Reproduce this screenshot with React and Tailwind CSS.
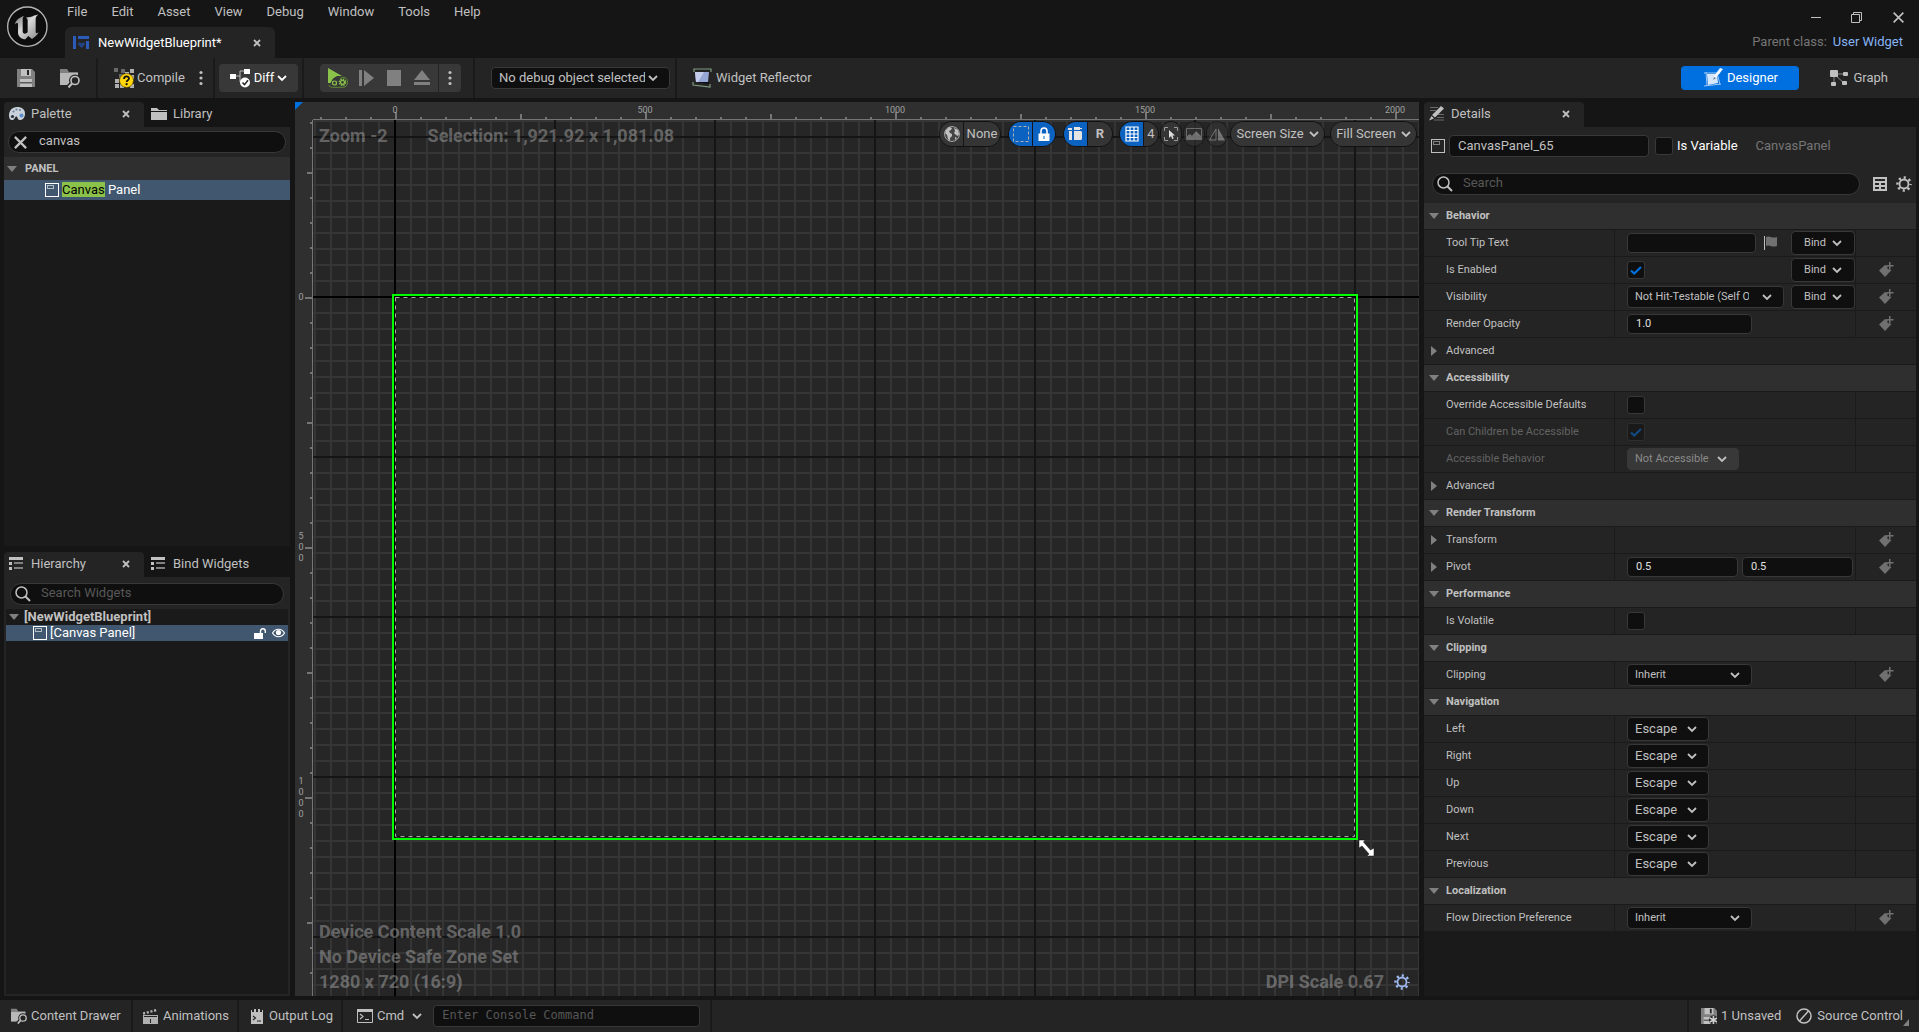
import { useState } from 'react';

const menus = ['File', 'Edit', 'Asset', 'View', 'Debug', 'Window', 'Tools', 'Help'];

const sections = [
  {
    title: 'Behavior',
    rows: [
      { label: 'Tool Tip Text', type: 'text', bind: true, flag: true },
      { label: 'Is Enabled', type: 'check', checked: true, bind: true, key: true },
      {
        label: 'Visibility',
        type: 'select',
        value: 'Not Hit-Testable (Self Only)',
        width: 'w-[157px]',
        padding: 'pr-[34px]',
        bind: true,
        key: true,
      },
      { label: 'Render Opacity', type: 'number', values: ['1.0'], key: true },
      { label: 'Advanced', type: 'advanced' },
    ],
  },
  {
    title: 'Accessibility',
    rows: [
      { label: 'Override Accessible Defaults', type: 'check' },
      { label: 'Can Children be Accessible', type: 'check', checked: true, disabled: true },
      {
        label: 'Accessible Behavior',
        type: 'select',
        value: 'Not Accessible',
        width: 'w-[112px]',
        disabled: true,
      },
      { label: 'Advanced', type: 'advanced' },
    ],
  },
  {
    title: 'Render Transform',
    rows: [
      { label: 'Transform', type: 'empty', expand: true, key: true },
      { label: 'Pivot', type: 'number', values: ['0.5', '0.5'], expand: true, key: true },
    ],
  },
  { title: 'Performance', rows: [{ label: 'Is Volatile', type: 'check' }] },
  {
    title: 'Clipping',
    rows: [{ label: 'Clipping', type: 'select', value: 'Inherit', width: 'w-[125px]', key: true }],
  },
  {
    title: 'Navigation',
    rows: ['Left', 'Right', 'Up', 'Down', 'Next', 'Previous'].map((label) => ({
      label,
      type: 'escape',
    })),
  },
  {
    title: 'Localization',
    rows: [
      {
        label: 'Flow Direction Preference',
        type: 'select',
        value: 'Inherit',
        width: 'w-[125px]',
        key: true,
      },
    ],
  },
];

/* ---------- icons ---------- */

function Chevron({ className = '' }) {
  return (
    <svg className={className} width="10" height="10" viewBox="0 0 10 10" fill="none" stroke="currentColor" strokeWidth="1.8">
      <path d="M1 3l4 4 4-4" />
    </svg>
  );
}

function Cross({ size = 8, stroke = 1.8 }) {
  return (
    <svg width={size} height={size} viewBox="0 0 8 8" fill="none" stroke="currentColor" strokeWidth={stroke}>
      <path d="M1 1l6 6M7 1L1 7" />
    </svg>
  );
}

function Dots() {
  return (
    <svg width="4" height="16" viewBox="0 0 4 16" fill="currentColor">
      <circle cx="2" cy="2.5" r="1.6" />
      <circle cx="2" cy="8" r="1.6" />
      <circle cx="2" cy="13.5" r="1.6" />
    </svg>
  );
}

function Arrow({ open }) {
  return (
    <svg width="10" height="10" viewBox="0 0 10 10" fill="#808080">
      {open ? <path d="M0 2h10L5 8z" /> : <path d="M2 0v10l6-5z" />}
    </svg>
  );
}

function UnrealLogo() {
  return (
    <svg width="44" height="44" viewBox="0 0 132 132">
      <defs>
        <linearGradient id="metal" x1="0" y1="0" x2="1" y2="1">
          <stop offset="0" stopColor="#6d6d6d" />
          <stop offset="0.45" stopColor="#d8d8d8" />
          <stop offset="1" stopColor="#8a8a8a" />
        </linearGradient>
      </defs>
      <circle cx="67" cy="68" r="59" fill="#0d0d0d" stroke="#b4b4b4" strokeWidth="4" />
      <path
        fill="url(#metal)"
        d="M29 61c6-15 15-21 28-25-3 3-4 6-4 10v36c0 7 6 9 11 6l4-3V50c0-6-2-8-6-9 9-2 19-2 24-6 5-1 9-1 14-4-6 6-8 10-8 15v37c0 5 4 6 9 2-4 9-12 15-20 20l-11-9-9 10c-12-1-21-8-22-20V62c0-6-4-6-10-1z"
      />
    </svg>
  );
}

function BlueprintIcon() {
  return (
    <svg width="16" height="14" viewBox="0 0 16 14">
      <path fill="#2d5bb9" d="M0 0h3v13H0zM5 0h11v3H5zM13 5h3v8h-3z" />
      <path fill="#234384" d="M8.500 12L5 8.500c0-2.500 2.500-2.500 3.500-1 1-1.500 3.500-1.500 3.500 1z" />
    </svg>
  );
}

function SaveIcon({ star }) {
  const size = star ? 16 : 18;
  return (
    <svg width={size} height={size} viewBox="0 0 18 18">
      <path fill="#808080" d="M0 0h15l3 3v15H0z" />
      <path fill="#c0c0c0" d="M4 0h10v7H4zM3 10h12v8H3z" />
      <path fill="#242424" d="M10 1h2v5h-2z" />
      <path fill="#5a5a5a" d="M3 13h12v1.500H3z" />
      {star && (
        <>
          <circle cx="14" cy="13.500" r="5" fill="#242424" />
          <path stroke="#d0d0d0" strokeWidth="1.800" d="M14 9v9M10 11.200l8 4.600M18 11.200l-8 4.600" />
        </>
      )}
    </svg>
  );
}

function BrowseIcon({ size = 20 }) {
  return (
    <svg width={size} height={size} viewBox="0 0 20 20">
      <path fill="#808080" d="M0 1h7l2 3h9v2H0z" />
      <path fill="#b8b8b8" d="M0 5h18v12H0z" />
      <circle cx="15" cy="12.500" r="6" fill="#242424" />
      <path stroke="#242424" strokeWidth="4" d="M12 15l-5 5" />
      <circle cx="15" cy="12.500" r="4" fill="#242424" stroke="#c0c0c0" strokeWidth="1.600" />
      <path stroke="#c0c0c0" strokeWidth="2" d="M12 15.500L8.500 19.500" />
    </svg>
  );
}

function CompileIcon() {
  return (
    <svg width="20" height="20" viewBox="0 0 20 20">
      <path fill="#6a6a6a" d="M0 0h4v4H0zM7 1h4v4H7zM5 6h4v4H5z" />
      <path fill="#b0b0b0" d="M16 1h4v4h-4zM11 4h4v3h-4zM1 11h4v4H1zM1 16h4v4H1zM6 16h4v4H6zM16 7h4v4h-4zM16 16h4v4h-4z" />
      <circle cx="12.500" cy="12.500" r="7" fill="#ffd60a" stroke="#3a3000" strokeWidth="0.600" />
      <path fill="none" stroke="#111" strokeWidth="1.800" d="M10 11c0-3.400 5-3.400 5-.4 0 1.700-2.400 1.600-2.400 3.400" />
      <circle cx="12.600" cy="16.200" r="1.100" fill="#111" />
    </svg>
  );
}

function DiffIcon() {
  return (
    <svg width="21" height="20" viewBox="0 0 21 20">
      <path fill="none" stroke="#bbb" d="M6 8h4V3h4M10 8v6h3" />
      <path fill="#fff" d="M0 6h6v5H0zM14 1h6v5h-6z" />
      <circle cx="15" cy="14.500" r="5" fill="#fff" />
      <path fill="none" stroke="#222" strokeWidth="1.500" d="M12.500 14.500l2 2.200 3.500-4.400" />
    </svg>
  );
}

function PlayIcon() {
  return (
    <svg width="20" height="20" viewBox="0 0 20 20">
      <path fill="#8bc34a" d="M0 0l14 8H9l-4 2.500-2.500 4.500H0z" />
      <path
        fill="none"
        stroke="#5f8a35"
        d="M1 17c0 1.500 1.500 2.300 3.500 2.300H15c3 0 4.500-2 4.500-5s-1.500-5-4.500-5c-1.500 0-2.500.6-3.200 1.500"
      />
      <path stroke="#8bc34a" strokeWidth="3" strokeDasharray="1.200 0.800" d="M4 15h5" />
      <circle cx="6.500" cy="15" r="2" fill="#383838" stroke="#8bc34a" strokeWidth="1.200" />
      <circle cx="14.500" cy="14.300" r="3" fill="none" stroke="#8bc34a" strokeWidth="1.600" strokeDasharray="1.400 0.950" />
      <circle cx="14.500" cy="14.300" r="2" fill="#383838" stroke="#8bc34a" strokeWidth="1.200" />
    </svg>
  );
}

function ReflectorIcon() {
  return (
    <svg width="20" height="20" viewBox="0 0 20 20">
      <path fill="#97a7d6" d="M3 4h14l-1 10H4z" />
      <path fill="#c3ccea" d="M3 4h9l-6 10H4z" />
      <path fill="none" stroke="#7f9b80" strokeWidth="1.200" d="M2 4V1h17v3M1 14v3l17 2v-3" />
      <path fill="#0b0e14" d="M4 14h13v2z" />
    </svg>
  );
}

function DesignerIcon() {
  return (
    <svg width="20" height="20" viewBox="0 0 20 20">
      <path fill="#d7e7fb" d="M4 6h10l1 9-10 2z" />
      <path fill="none" stroke="#9cc6f5" d="M1 5h16M3 4l1 14M1 18l17-2M15 8l2 9" />
      <path fill="#f4f8ff" d="M17 0l3 1-7 9-3 2 1-4z" />
      <path fill="#5d7897" d="M10 12l1-3 2 1z" />
    </svg>
  );
}

function GraphIcon() {
  return (
    <svg width="18" height="17" viewBox="0 0 18 17">
      <path stroke="#8a8a8a" d="M4 4h12M4 4v10M5 5l9 8" />
      <g fill="#c0c0c0">
        <rect width="8" height="7" rx="1" />
        <rect x="13" y="2" width="5" height="4" rx="1" />
        <rect x="1" y="12" width="5" height="4" rx="1" />
        <rect x="12" y="11" width="5" height="4" rx="1" />
      </g>
    </svg>
  );
}

function PaletteIcon() {
  return (
    <svg width="16" height="14" viewBox="0 0 16 14">
      <path fill="#c9d2da" d="M8 0c5 0 8 2.500 8 6.500 0 4-2 6.500-5 6.500s-2-3-3.500-3.500C6 9 6 13 3 13c-2 0-3-2-3-4.500C0 4 3 0 8 0z" />
      <g fill="#6d8299">
        <circle cx="4.500" cy="4.500" r="1.100" />
        <circle cx="7.500" cy="2.500" r="1.100" />
        <circle cx="11" cy="3" r="1.100" />
      </g>
      <circle cx="3.500" cy="9.500" r="1.600" fill="#2a2f36" />
      <circle cx="12.500" cy="8.500" r="2" fill="#5b8fc9" />
    </svg>
  );
}

function FolderIcon() {
  return (
    <svg width="16" height="12" viewBox="0 0 16 12" fill="#c0c0c0">
      <path d="M0 0h6l2 2h8v1H0zM0 4h16v8H0z" />
    </svg>
  );
}

function ListIcon() {
  return (
    <svg width="14" height="13" viewBox="0 0 14 13">
      <path fill="#c0c0c0" d="M0 0h14v3H0zM0 5h3v3H0zM0 10h3v3H0z" />
      <path fill="#808080" d="M5 5h9v2H5zM5 10h9v2H5z" />
    </svg>
  );
}

function DetailsIcon() {
  return (
    <svg width="16" height="15" viewBox="0 0 16 15">
      <path stroke="#6a6a6a" d="M1 1.500h8M1 4.500h6M9 8.500h6M8 11.500h7M5 14h10" />
      <path fill="#c0c0c0" d="M12 0l3 2.500-9 9L3 9zM2.500 10L5 12.500 0 14.500z" />
    </svg>
  );
}

function PanelIcon({ color = '#fff' }) {
  return (
    <svg width="14" height="14" viewBox="0 0 14 14" fill="none" stroke={color}>
      <rect x="0.500" y="0.500" width="13" height="13" />
      <rect x="2.500" y="2.500" width="6" height="3" strokeOpacity="0.600" />
    </svg>
  );
}

function SearchIcon() {
  return (
    <svg width="16" height="16" viewBox="0 0 16 16" fill="none" stroke="#c0c0c0">
      <circle cx="6.500" cy="6.500" r="5.500" strokeWidth="1.500" />
      <path strokeWidth="2" d="M10.500 10.500l4.500 4.500" />
    </svg>
  );
}

function GearIcon({ color = '#c0c0c0' }) {
  return (
    <svg width="16" height="16" viewBox="0 0 16 16" fill="none" stroke={color}>
      <circle cx="8" cy="8" r="4.500" strokeWidth="1.800" />
      <circle cx="8" cy="8" r="6.500" strokeWidth="2.500" strokeDasharray="2.200 2.905" strokeDashoffset="1.100" />
    </svg>
  );
}

function KeyIcon() {
  return (
    <svg width="16" height="16" viewBox="0 0 16 16" fill="#707070">
      <path d="M7 3l2.500 1v3l4 1-6.500 7-6-6.500z" />
      <path d="M11 0h1.500v3h3v1.500h-3v3H11v-3H8.500V3H11z" />
    </svg>
  );
}

function FlagIcon() {
  return (
    <svg width="13" height="14" viewBox="0 0 13 14">
      <path fill="#c0c0c0" d="M0 0h1v14H0z" />
      <path fill="#707070" d="M2 1c4-2 5 2 11 0v9c-6 2-7-2-11 0z" />
    </svg>
  );
}

function CheckMark() {
  return (
    <svg width="12" height="9" viewBox="0 0 12 9" fill="none" stroke="#0070e0" strokeWidth="2.200">
      <path d="M1 4.500L4.200 7.500 11 1" />
    </svg>
  );
}

/* ---------- shared controls ---------- */

function Tab({ icon, label, active, width = '' }) {
  return (
    <div
      className={`flex h-[25px] items-center rounded-t pb-0.5 ${width} ${
        active ? 'bg-[#242424] px-[5px]' : 'px-[7px]'
      }`}
    >
      <span className="flex w-[22px] shrink-0">{icon}</span>
      <button className="flex-1 text-left whitespace-nowrap">{label}</button>
      {active && (
        <button aria-label={`Close ${label}`} className="pr-[9px]">
          <Cross />
        </button>
      )}
    </div>
  );
}

function SearchBox({ icon, label, value = '', placeholder }) {
  const [text, setText] = useState(value);
  return (
    <div className="flex h-[22px] flex-1 items-center gap-2.5 rounded-full border border-[#383838] bg-[#0f0f0f] pl-1">
      <span className="flex w-4 shrink-0">{icon}</span>
      <input
        aria-label={label}
        value={text}
        placeholder={placeholder}
        onChange={(e) => setText(e.target.value)}
        className="w-full bg-transparent pb-0.5 outline-none placeholder:text-[#575757]"
      />
    </div>
  );
}

function CheckBox({ id, checked = false, disabled }) {
  const [on, setOn] = useState(checked);
  return (
    <span className={`relative flex ${disabled ? 'opacity-50' : ''}`}>
      <input
        id={id}
        type="checkbox"
        checked={on}
        disabled={disabled}
        onChange={() => setOn(!on)}
        className="size-[18px] appearance-none rounded-[3px] border border-[#383838] bg-[#0f0f0f]"
      />
      {on && (
        <span className="pointer-events-none absolute inset-0 flex items-center justify-center">
          <CheckMark />
        </span>
      )}
    </span>
  );
}

function Select({ id, label, value, className, padding = 'pr-6', disabled }) {
  return (
    <span className={`relative flex ${className}`}>
      <select
        id={id}
        aria-label={label}
        disabled={disabled}
        className={`w-full appearance-none overflow-hidden rounded border border-[#383838] pl-[7px] ${padding} ${
          disabled ? 'bg-[#383838] text-[#8a8a8a]' : 'bg-[#0f0f0f]'
        }`}
      >
        <option>{value}</option>
      </select>
      <span className="pointer-events-none absolute inset-y-0 right-3 flex items-center">
        <Chevron />
      </span>
    </span>
  );
}

function PropertyValue({ row, id }) {
  if (row.type === 'text') {
    return (
      <input
        id={id}
        className="h-5 w-[129px] rounded border border-[#383838] bg-[#0f0f0f] px-2 outline-none"
      />
    );
  }
  if (row.type === 'check') {
    return <CheckBox id={id} checked={row.checked} disabled={row.disabled} />;
  }
  if (row.type === 'select') {
    return (
      <Select
        id={id}
        value={row.value}
        disabled={row.disabled}
        padding={row.padding}
        className={`h-[22px] ${row.width}`}
      />
    );
  }
  if (row.type === 'escape') {
    return <Select id={id} value="Escape" className="h-6 w-[82px] text-[13px]" />;
  }
  if (row.type === 'number') {
    return (
      <div className="flex gap-1">
        {row.values.map((value, i) => (
          <input
            key={i}
            id={i === 0 ? id : undefined}
            aria-label={i === 0 ? undefined : `${row.label} Y`}
            defaultValue={value}
            className={`h-5 rounded border border-[#383838] bg-[#0f0f0f] px-2 pb-0.5 text-[#e0e0e0] outline-none ${
              row.values.length > 1 ? 'w-[111px]' : 'w-[125px]'
            }`}
          />
        ))}
      </div>
    );
  }
  return null;
}

function PropertyRow({ row, section }) {
  const id = `${section}-${row.label}`.replaceAll(' ', '-').toLowerCase();

  if (row.type === 'advanced') {
    return (
      <button className="flex h-[27px] w-full items-center gap-[7px] border-b border-[#1a1a1a] bg-[#242424] px-[5px]">
        <Arrow />
        Advanced
      </button>
    );
  }

  return (
    <div className="flex h-[27px] border-b border-[#1a1a1a] bg-[#242424]">
      <div className="flex w-[191px] shrink-0 items-center gap-[7px] border-r border-[#1a1a1a] px-[5px]">
        <span className="w-2.5">{row.expand && <Arrow />}</span>
        <label htmlFor={id} className={row.disabled ? 'text-[#636363]' : ''}>
          {row.label}
        </label>
      </div>
      <div className="flex flex-1 items-center border-r border-[#1a1a1a] pl-3">
        <PropertyValue row={row} id={id} />
        {row.flag && (
          <button aria-label="Localization settings" className="ml-2">
            <FlagIcon />
          </button>
        )}
        {row.bind && (
          <button className="ml-auto flex h-6 w-16 items-center justify-center gap-1.5 rounded border border-[#383838] bg-[#0f0f0f]">
            Bind
            <Chevron />
          </button>
        )}
      </div>
      <div className="flex w-[60px] shrink-0 items-center justify-center">
        {row.key && (
          <button aria-label={`Add keyframe for ${row.label}`}>
            <KeyIcon />
          </button>
        )}
      </div>
    </div>
  );
}

/* ---------- title bar and toolbar ---------- */

function TitleBar() {
  return (
    <header className="flex h-[58px] shrink-0 pl-[5px]">
      <div className="mt-1 w-[60px] shrink-0">
        <UnrealLogo />
      </div>
      <div className="flex flex-1 flex-col">
        <nav className="-ml-2.5 flex h-[27px] items-start pt-1">
          {menus.map((menu) => (
            <button key={menu} className="px-3">
              {menu}
            </button>
          ))}
        </nav>
        <div className="flex h-[31px] w-[210px] items-center rounded-t-md bg-[#242424] pr-3.5 pl-2 text-white">
          <BlueprintIcon />
          <span className="ml-[9px] flex-1">NewWidgetBlueprint*</span>
          <button aria-label="Close tab" className="text-[#c0c0c0]">
            <Cross />
          </button>
        </div>
      </div>
      <div className="flex flex-col items-end pr-3.5">
        <div className="flex h-[34px] items-center gap-[30px]">
          <button aria-label="Minimize">
            <svg width="10" height="11" viewBox="0 0 10 11" stroke="currentColor">
              <path d="M0 5.500h10" />
            </svg>
          </button>
          <button aria-label="Restore">
            <svg width="11" height="11" viewBox="0 0 11 11" fill="none" stroke="currentColor">
              <path d="M0.500 2.500h8v8h-8zM2.500 2.500v-2h8v8h-2" />
            </svg>
          </button>
          <button aria-label="Close">
            <Cross size={13} stroke={1} />
          </button>
        </div>
        <div className="flex gap-1.5 pr-0.5">
          <span className="text-[#757575]">Parent class:</span>
          <a href="#user-widget" className="text-[#86b4f5]">
            User Widget
          </a>
        </div>
      </div>
    </header>
  );
}

function Separator() {
  return <div className="w-0.5 self-stretch bg-[#1a1a1a]" />;
}

function Toolbar() {
  return (
    <div className="flex h-10 shrink-0 items-center bg-[#242424]">
      <div className="flex w-24 items-center gap-[25px] pl-[17px]">
        <button aria-label="Save">
          <SaveIcon />
        </button>
        <button aria-label="Browse">
          <BrowseIcon />
        </button>
      </div>
      <Separator />
      <div className="flex w-[115px] items-center pl-4">
        <button className="flex items-center gap-[3px]">
          <CompileIcon />
          Compile
        </button>
        <button aria-label="Compile options" className="ml-3.5">
          <Dots />
        </button>
      </div>
      <Separator />
      <button className="mx-1 flex h-7 w-[79px] items-center justify-center gap-[3px] rounded bg-[#383838] text-white">
        <DiffIcon />
        Diff
        <Chevron />
      </button>
      <Separator />
      <div className="ml-4 flex h-7 items-center rounded bg-[#383838] text-[#808080]">
        <button aria-label="Play" className="pr-[11px] pl-2">
          <PlayIcon />
        </button>
        <button aria-label="Step" className="w-7">
          <svg width="15" height="16" viewBox="0 0 15 16" fill="currentColor">
            <path d="M0 0h3v16H0zM5 0l10 8-10 8z" />
          </svg>
        </button>
        <button aria-label="Stop" className="w-[27px]">
          <svg width="14" height="16" viewBox="0 0 14 16" fill="currentColor">
            <path d="M0 0h14v16H0z" />
          </svg>
        </button>
        <button aria-label="Eject" className="w-6">
          <svg width="16" height="16" viewBox="0 0 16 16" fill="currentColor">
            <path d="M8 0l8 10H0zM0 12h16v3H0z" />
          </svg>
        </button>
        <button
          aria-label="Play options"
          className="flex h-7 w-[23px] items-center justify-center border-l border-[#242424] text-[#c0c0c0]"
        >
          <Dots />
        </button>
      </div>
      <div className="ml-3 flex self-stretch">
        <Separator />
      </div>
      <Select
        label="Debug object"
        value="No debug object selected"
        className="mr-[5px] ml-4 h-[22px] w-[179px]"
      />
      <Separator />
      <button className="ml-[15px] flex items-center gap-1">
        <ReflectorIcon />
        Widget Reflector
      </button>
      <div className="ml-auto flex items-center pr-[31px]">
        <button className="flex h-6 w-[118px] items-center justify-center gap-1 rounded bg-[#0070e0] text-white">
          <DesignerIcon />
          Designer
        </button>
        <button className="ml-[31px] flex items-center gap-[5px]">
          <GraphIcon />
          Graph
        </button>
      </div>
    </div>
  );
}

/* ---------- left column ---------- */

function PalettePanel() {
  return (
    <section className="flex flex-1 flex-col">
      <div className="flex">
        <Tab icon={<PaletteIcon />} label="Palette" active width="w-[140px]" />
        <Tab icon={<FolderIcon />} label="Library" />
      </div>
      <div className="flex h-[30px] items-center bg-[#242424] px-1">
        <SearchBox icon={<Cross size={15} stroke={1.2} />} label="Search palette" value="canvas" />
      </div>
      <div className="flex flex-1 flex-col bg-[#1a1a1a]">
        <button className="flex h-[23px] items-center gap-2 bg-[#2f2f2f] px-[3px] text-[11px] font-bold">
          <Arrow open />
          PANEL
        </button>
        <button className="flex h-5 items-center gap-[3px] bg-[#40576f] pl-[41px] text-white">
          <PanelIcon />
          <span>
            <mark className="bg-[#8bc34a] text-black">Canvas</mark> Panel
          </span>
        </button>
      </div>
    </section>
  );
}

function HierarchyPanel() {
  return (
    <section className="flex flex-1 flex-col">
      <div className="flex">
        <Tab icon={<ListIcon />} label="Hierarchy" active width="w-[140px]" />
        <Tab icon={<ListIcon />} label="Bind Widgets" />
      </div>
      <div className="flex flex-1 flex-col bg-[#242424] px-0.5 pt-1.5 pb-0.5">
        <div className="flex h-[22px] px-1">
          <SearchBox icon={<SearchIcon />} label="Search widgets" placeholder="Search Widgets" />
        </div>
        <div className="mt-1 flex-1 bg-[#1a1a1a]">
          <button className="flex h-4 w-full items-center gap-[5px] px-[3px] font-bold">
            <Arrow open />
            [NewWidgetBlueprint]
          </button>
          <div className="flex h-4 items-center bg-[#40576f] pr-[3px] pl-[27px] text-white">
            <PanelIcon />
            <button className="ml-[3px] flex-1 text-left">[Canvas Panel]</button>
            <button aria-label="Lock">
              <svg width="12" height="11" viewBox="0 0 12 11">
                <path fill="#fff" d="M0 5h9v6H0z" />
                <path fill="none" stroke="#fff" strokeWidth="1.400" d="M6.500 5V3c0-3 4.800-3 4.800 0v2" />
              </svg>
            </button>
            <button aria-label="Visible" className="ml-[6px]">
              <svg width="13" height="10" viewBox="0 0 13 10">
                <path fill="none" stroke="#fff" strokeWidth="1.200" d="M0.500 5c3-5 9-5 12 0-3 5-9 5-12 0z" />
                <circle cx="6.500" cy="4.500" r="2.600" fill="#fff" />
              </svg>
            </button>
          </div>
        </div>
      </div>
    </section>
  );
}

/* ---------- designer viewport ---------- */

const STEP = 25; // one ruler tick, 50 slate units
const TICKS = Array.from({ length: 120 }, (_, i) => i - 20);

function tickSize(n) {
  if (n % 10 === 0) return 7;
  return n % 5 === 0 ? 5 : 2;
}

function TopRuler() {
  return (
    <svg className="h-[18px] min-w-0 flex-1" fill="#757575">
      {TICKS.map((n) => (
        <rect key={n} x={82 + n * STEP} y={17 - tickSize(n)} width="2" height={tickSize(n)} />
      ))}
      <rect y="17" width="100%" height="1" />
      {[0, 500, 1000, 1500, 2000].map((value) => (
        <text key={value} x={82 + value / 2} y="11" textAnchor="middle" fontSize="9" fill="#a0a0a0">
          {value}
        </text>
      ))}
    </svg>
  );
}

function SideRuler() {
  return (
    <svg className="h-full w-[18px] shrink-0 bg-[#2f2f2f]" fill="#757575">
      {TICKS.map((n) => (
        <rect key={n} x={17 - tickSize(n)} y={177 + n * STEP} width={tickSize(n)} height="2" />
      ))}
      <rect x="17" width="1" height="100%" />
      {[0, 500, 1000].map((value) => {
        const digits = String(value).split('');
        return digits.map((digit, i) => (
          <text
            key={`${value}-${i}`}
            x="6"
            y={180 + value / 2 + i * 11 - ((digits.length - 1) * 11) / 2}
            textAnchor="middle"
            fontSize="9"
            fill="#a0a0a0"
          >
            {digit}
          </text>
        ));
      })}
    </svg>
  );
}

function CanvasGrid() {
  return (
    <svg className="h-full w-full">
      <defs>
        <pattern id="minor" x="81" y="176" width="16" height="16" patternUnits="userSpaceOnUse">
          <path fill="#353535" d="M0 0h16v2H0zM0 0h2v16H0z" />
        </pattern>
        <pattern id="major" x="81" y="176" width="160" height="160" patternUnits="userSpaceOnUse">
          <path fill="#151515" d="M0 0h160v2H0zM0 0h2v160H0z" />
        </pattern>
      </defs>
      <rect width="100%" height="100%" fill="#262626" />
      <rect width="100%" height="100%" fill="url(#minor)" />
      <rect width="100%" height="100%" fill="url(#major)" />
      <rect x="81" width="2" height="100%" fill="#000" />
      <rect y="176" width="100%" height="2" fill="#000" />

      {/* root widget bounds and selection outline */}
      <rect x="82.500" y="177.500" width="959" height="539" fill="none" stroke="#111" />
      <rect x="82.500" y="177.500" width="959" height="539" fill="none" stroke="#a8a8a8" strokeDasharray="4 4" />
      <rect x="80" y="175" width="964" height="544" fill="none" stroke="#00ff00" strokeWidth="2" />

      {/* resize cursor */}
      <path
        fill="#fff"
        stroke="#111"
        strokeWidth="0.500"
        d="M1046 720h6l-1.500 2 7 8 3.500-2v8h-7l2-2-7-8-3 2z"
      />
    </svg>
  );
}

function Pill({ children, label, pressed, className = '' }) {
  return (
    <button
      aria-label={label}
      aria-pressed={pressed}
      className={`flex h-full items-center justify-center ${pressed ? 'bg-[#0b62c0]' : 'bg-[#353535]'} ${className}`}
    >
      {children}
    </button>
  );
}

function PillGroup({ children, className = '' }) {
  return (
    <div
      className={`flex h-[26px] divide-x divide-[#151515] overflow-hidden rounded-full border border-[#111] ${className}`}
    >
      {children}
    </div>
  );
}

function ViewportToolbar() {
  return (
    <div className="absolute top-px right-0.5 flex items-center">
      <PillGroup>
        <Pill label="Localization preview" className="w-6">
          <svg width="16" height="16" viewBox="0 0 16 16">
            <circle cx="8" cy="8" r="7.500" fill="#444" stroke="#a0a0a0" />
            <path fill="#c0c0c0" d="M2 4l3-3 3 1-1 2-2 1 1 2 2 1v2l-2 2v3l-2-2-1-4-2-2zM10 2l4 2 1 4-1 2-2-1-2-2 1-2zM11 11l2 1-2 2z" />
          </svg>
        </Pill>
        <Pill className="w-9">None</Pill>
      </PillGroup>
      <PillGroup className="ml-[7px]">
        <Pill label="Show outlines" pressed className="w-6">
          <svg width="16" height="16" viewBox="0 0 16 16" fill="none" stroke="#b0b0b0">
            <rect x="0.500" y="0.500" width="15" height="15" strokeDasharray="3 2" />
          </svg>
        </Pill>
        <Pill label="Respect locks" pressed className="w-[22px]">
          <svg width="12" height="14" viewBox="0 0 12 14">
            <path fill="none" stroke="#fff" strokeWidth="1.600" d="M3 7V4c0-4 6-4 6 0v3" />
            <path fill="#fff" d="M0.500 6.500h11V14H0.500z" />
            <path fill="#0b62c0" d="M5.500 9h1v3h-1z" />
          </svg>
        </Pill>
      </PillGroup>
      <PillGroup className="ml-[7px]">
        <Pill label="Layout transform" pressed className="w-6">
          <svg width="15" height="14" viewBox="0 0 15 14" fill="#e4e4e4">
            <path d="M0 1h4v2H0zM1 4h3v9H1zM6 0h6v3H6zM12 1h2v1h-2zM6 4h7l1 1v7l-1 1H6z" />
          </svg>
        </Pill>
        <Pill label="Render transform" className="w-6 font-bold">
          R
        </Pill>
      </PillGroup>
      <PillGroup className="ml-1.5">
        <Pill label="Grid snapping" pressed className="w-6">
          <svg width="14" height="16" viewBox="0 0 14 16" fill="none" stroke="#fff" strokeWidth="1.200">
            <path d="M1 1h12v14H1zM5 1v14M9 1v14M1 4.500h12M1 8h12M1 11.500h12" />
          </svg>
        </Pill>
        <Pill label="Grid snap size" className="w-3.5">
          4
        </Pill>
      </PillGroup>
      <div className="ml-px flex gap-px">
        <PillGroup>
          <Pill label="Zoom to selection" className="w-5">
            <svg width="14" height="14" viewBox="0 0 14 14" fill="none" stroke="#999">
              <path d="M0.500 4V0.500H4M10 0.500h3.500V4M13.500 10v3.500H10M4 13.500H0.500V10" />
              <path fill="#ddd" stroke="none" d="M5 3l6 5.500H8.500l1.200 3-1.500.5L7 9l-2 2z" />
            </svg>
          </Pill>
        </PillGroup>
        <PillGroup className="opacity-60">
          <Pill label="Background image" className="w-5">
            <svg width="16" height="12" viewBox="0 0 16 12">
              <path fill="none" stroke="#999" d="M0.500 0.500h15v11H0.500z" />
              <path fill="#a8a8a8" d="M1 11V8l3-2 2 2 4-5 5 5v3z" />
            </svg>
          </Pill>
        </PillGroup>
        <PillGroup className="opacity-60">
          <Pill label="Mirror" className="w-5">
            <svg width="16" height="13" viewBox="0 0 16 13">
              <path fill="none" stroke="#aaa" d="M0.500 12L7 1v11z" />
              <path fill="#aaa" d="M9 0l7 12.500H9z" />
            </svg>
          </Pill>
        </PillGroup>
      </div>
      <PillGroup className="ml-0.5">
        <Pill className="w-[93px] gap-[5px]">
          Screen Size <Chevron />
        </Pill>
      </PillGroup>
      <PillGroup className="ml-[5px]">
        <Pill className="w-[85px] gap-[5px]">
          Fill Screen <Chevron />
        </Pill>
      </PillGroup>
    </div>
  );
}

function Viewport() {
  return (
    <main className="flex min-w-0 flex-1 flex-col">
      <div className="flex h-[18px] shrink-0 bg-[#2f2f2f]">
        <svg className="shrink-0" width="18" height="18" fill="#0070e0">
          <path d="M0 0h8L0 8z" />
        </svg>
        <TopRuler />
      </div>
      <div className="flex min-h-0 flex-1">
        <SideRuler />
        <div className="relative min-w-0 flex-1 overflow-hidden">
          <CanvasGrid />
          <div className="absolute top-[3px] left-1.5 flex gap-10 text-[18px] leading-[25px] font-bold whitespace-nowrap text-white/30">
            <span>Zoom -2</span>
            <span>Selection: 1,921.92 x 1,081.08</span>
          </div>
          <ViewportToolbar />
          <div className="absolute bottom-0.5 left-1.5 text-[18px] leading-[25px] font-bold text-white/30">
            <p>Device Content Scale 1.0</p>
            <p>No Device Safe Zone Set</p>
            <p>1280 x 720 (16:9)</p>
          </div>
          <div className="absolute right-[9px] bottom-0.5 flex items-center gap-2.5 text-[18px] leading-[25px] font-bold text-white/30">
            DPI Scale 0.67
            <button aria-label="DPI settings">
              <GearIcon color="#9db7ee" />
            </button>
          </div>
        </div>
      </div>
    </main>
  );
}

/* ---------- details ---------- */

function DetailsPanel() {
  return (
    <aside className="flex w-[492px] shrink-0 flex-col">
      <div className="flex">
        <Tab icon={<DetailsIcon />} label="Details" active width="w-[160px]" />
      </div>
      <div className="flex flex-col bg-[#242424]">
        <div className="flex items-center pt-2 pl-[7px]">
          <PanelIcon color="#c0c0c0" />
          <input
            aria-label="Widget name"
            defaultValue="CanvasPanel_65"
            className="ml-1 h-[22px] w-[200px] rounded border border-[#383838] bg-[#0f0f0f] px-2 pb-0.5 outline-none"
          />
          <span className="ml-1.5">
            <CheckBox id="is-variable" />
          </span>
          <label htmlFor="is-variable" className="ml-1 text-white">
            Is Variable
          </label>
          <span className="ml-[18px] text-[#757575]">CanvasPanel</span>
        </div>
        <div className="flex items-center pt-4 pr-1 pb-2 pl-2">
          <SearchBox icon={<SearchIcon />} label="Search details" placeholder="Search" />
          <button aria-label="Property matrix" className="ml-[13px]">
            <svg width="14" height="14" viewBox="0 0 14 14">
              <path fill="#c0c0c0" d="M0 0h14v14H0z" />
              <path fill="#242424" d="M2 2h10v2H2zM2 6h4v2H2zM8 6h4v2H8zM2 10h4v2H2zM8 10h4v2H8z" />
            </svg>
          </button>
          <button aria-label="View options" className="ml-[9px]">
            <GearIcon />
          </button>
        </div>
      </div>
      <div className="flex-1 overflow-hidden bg-[#1a1a1a] text-[11px]">
        {sections.map((section) => (
          <section key={section.title}>
            <button className="flex h-[27px] w-full items-center gap-[7px] border-b border-[#1a1a1a] bg-[#2f2f2f] px-[5px] font-bold">
              <Arrow open />
              {section.title}
            </button>
            {section.rows.map((row) => (
              <PropertyRow key={row.label} row={row} section={section.title} />
            ))}
          </section>
        ))}
      </div>
    </aside>
  );
}

/* ---------- status bar ---------- */

function StatusBar() {
  return (
    <footer className="flex h-8 shrink-0 items-center bg-[#242424]">
      <button className="flex w-[131px] items-center gap-1 pl-[11px] whitespace-nowrap">
        <BrowseIcon size={16} />
        Content Drawer
      </button>
      <Separator />
      <button className="flex w-[104px] items-center gap-[5px] pl-2.5">
        <svg width="15" height="15" viewBox="0 0 15 15">
          <path fill="#b0b0b0" d="M0 6h15v9H0z" />
          <path fill="#242424" d="M1 7h13v1H1zM7 10h1v4H7z" />
          <path stroke="#b0b0b0" strokeWidth="2.400" strokeDasharray="2.200 1.600" d="M0 4.500L14 1" />
        </svg>
        Animations
      </button>
      <Separator />
      <button className="flex w-[102px] items-center gap-1.5 pl-3">
        <svg width="12" height="15" viewBox="0 0 12 15">
          <path fill="#c0c0c0" d="M0 1h1v2h2V0h2v3h2V0h2v3h2V1h1v14H0z" />
          <path fill="none" stroke="#242424" strokeWidth="1.200" d="M2 7l2.500 2L2 11M6 12h4" />
        </svg>
        Output Log
      </button>
      <Separator />
      <button className="ml-3.5 flex items-center gap-1">
        <svg width="16" height="14" viewBox="0 0 16 14">
          <path fill="none" stroke="#c0c0c0" d="M0.500 0.500h15v13H0.500z" />
          <path fill="#c0c0c0" d="M0 0h16v3H0z" />
          <path fill="none" stroke="#c0c0c0" strokeWidth="1.200" d="M3 5l3 2.500L3 10M8 10.500h4" />
        </svg>
        Cmd
        <Chevron className="ml-1" />
      </button>
      <input
        aria-label="Console command"
        placeholder="Enter Console Command"
        className="mr-2.5 ml-[11px] h-[22px] w-[267px] rounded border border-[#383838] bg-[#0f0f0f] px-2 pb-0.5 font-['DejaVu_Sans_Mono',monospace] text-[12px] outline-none placeholder:text-[#575757]"
      />
      <Separator />
      <div className="ml-auto flex self-stretch">
        <Separator />
      </div>
      <button className="ml-3 flex items-center gap-1">
        <SaveIcon star />1 Unsaved
      </button>
      <button className="ml-[15px] flex items-center gap-[5px]">
        <svg width="16" height="16" viewBox="0 0 16 16" fill="none" stroke="#c0c0c0" strokeWidth="1.500">
          <circle cx="8" cy="8" r="7" />
          <path d="M3.500 13l9-10" />
        </svg>
        Source Control
      </button>
      <svg className="mr-2.5 self-end pb-1.5" width="6" height="13" viewBox="0 0 6 7" fill="#808080">
        <path d="M6 0v7H0z" />
      </svg>
    </footer>
  );
}

export default function App() {
  return (
    <div className="flex h-screen min-w-[1280px] flex-col overflow-hidden bg-[#151515] font-[Roboto,sans-serif] text-[13px] leading-4 text-[#c0c0c0]">
      <TitleBar />
      <Toolbar />
      <div className="flex min-h-0 flex-1 gap-[5px] py-1 pr-[3px] pl-1">
        <div className="flex w-[286px] shrink-0 flex-col gap-1.5">
          <PalettePanel />
          <HierarchyPanel />
        </div>
        <Viewport />
        <DetailsPanel />
      </div>
      <StatusBar />
    </div>
  );
}
